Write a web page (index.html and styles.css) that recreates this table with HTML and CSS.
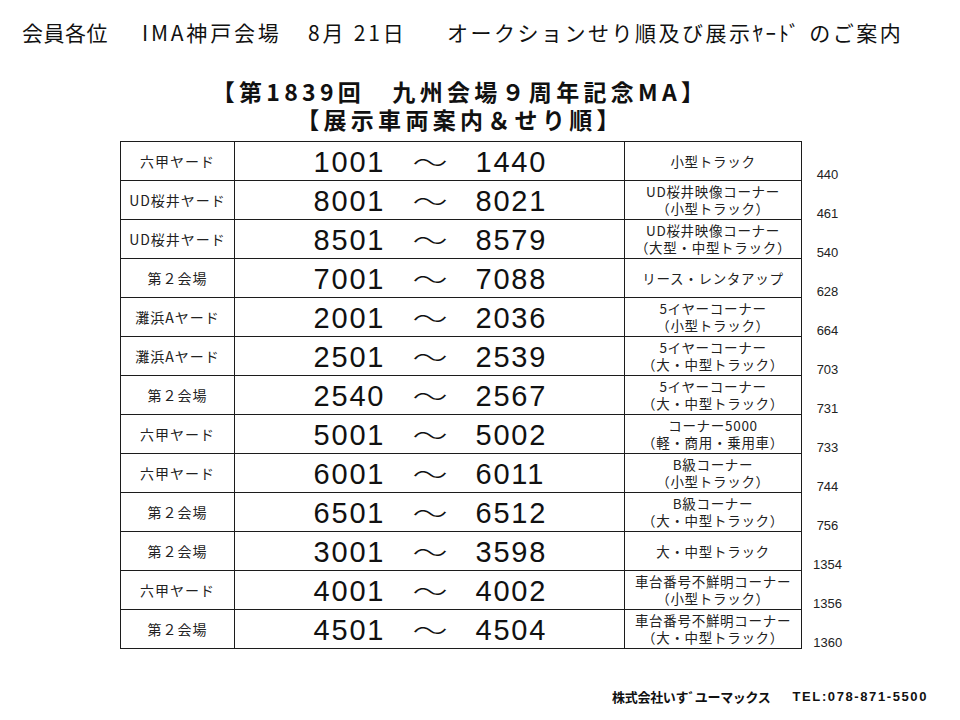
FILE: index.html
```html
<!DOCTYPE html>
<html lang="ja">
<head>
<meta charset="utf-8">
<title>IMA神戸会場 オークションせり順</title>
<link rel="stylesheet" href="styles.css">
</head>
<body>
<header class="head">
  <span class="h-who">会員各位</span>
  <span class="h-item">IMA神戸会場</span>
  <span class="h-item">8月 21日</span>
  <span class="h-item h-last">オークションせり順及び展示ﾔｰﾄﾞ のご案内</span>
</header>

<div class="title">
  <div>【第1839回　九州会場９周年記念MA】</div>
  <div>【展示車両案内＆せり順】</div>
</div>

<table class="grid">
  <colgroup>
    <col class="c-yard"><col class="c-range"><col class="c-corner"><col class="c-count">
  </colgroup>
  <tbody>
    <tr><td class="yard">六甲ヤード</td><td class="range"><div class="rg"><span class="n1">1001</span><span class="til">～</span><span class="n2">1440</span></div></td><td class="corner">小型トラック</td><td class="count">440</td></tr>
    <tr><td class="yard">UD桜井ヤード</td><td class="range"><div class="rg"><span class="n1">8001</span><span class="til">～</span><span class="n2">8021</span></div></td><td class="corner">UD桜井映像コーナー<br>（小型トラック）</td><td class="count">461</td></tr>
    <tr><td class="yard">UD桜井ヤード</td><td class="range"><div class="rg"><span class="n1">8501</span><span class="til">～</span><span class="n2">8579</span></div></td><td class="corner">UD桜井映像コーナー<br>（大型・中型トラック）</td><td class="count">540</td></tr>
    <tr><td class="yard">第２会場</td><td class="range"><div class="rg"><span class="n1">7001</span><span class="til">～</span><span class="n2">7088</span></div></td><td class="corner">リース・レンタアップ</td><td class="count">628</td></tr>
    <tr><td class="yard">灘浜Aヤード</td><td class="range"><div class="rg"><span class="n1">2001</span><span class="til">～</span><span class="n2">2036</span></div></td><td class="corner">5イヤーコーナー<br>（小型トラック）</td><td class="count">664</td></tr>
    <tr><td class="yard">灘浜Aヤード</td><td class="range"><div class="rg"><span class="n1">2501</span><span class="til">～</span><span class="n2">2539</span></div></td><td class="corner">5イヤーコーナー<br>（大・中型トラック）</td><td class="count">703</td></tr>
    <tr><td class="yard">第２会場</td><td class="range"><div class="rg"><span class="n1">2540</span><span class="til">～</span><span class="n2">2567</span></div></td><td class="corner">5イヤーコーナー<br>（大・中型トラック）</td><td class="count">731</td></tr>
    <tr><td class="yard">六甲ヤード</td><td class="range"><div class="rg"><span class="n1">5001</span><span class="til">～</span><span class="n2">5002</span></div></td><td class="corner">コーナー5000<br>（軽・商用・乗用車）</td><td class="count">733</td></tr>
    <tr><td class="yard">六甲ヤード</td><td class="range"><div class="rg"><span class="n1">6001</span><span class="til">～</span><span class="n2">6011</span></div></td><td class="corner">B級コーナー<br>（小型トラック）</td><td class="count">744</td></tr>
    <tr><td class="yard">第２会場</td><td class="range"><div class="rg"><span class="n1">6501</span><span class="til">～</span><span class="n2">6512</span></div></td><td class="corner">B級コーナー<br>（大・中型トラック）</td><td class="count">756</td></tr>
    <tr><td class="yard">第２会場</td><td class="range"><div class="rg"><span class="n1">3001</span><span class="til">～</span><span class="n2">3598</span></div></td><td class="corner">大・中型トラック</td><td class="count">1354</td></tr>
    <tr><td class="yard">六甲ヤード</td><td class="range"><div class="rg"><span class="n1">4001</span><span class="til">～</span><span class="n2">4002</span></div></td><td class="corner">車台番号不鮮明コーナー<br>（小型トラック）</td><td class="count">1356</td></tr>
    <tr><td class="yard">第２会場</td><td class="range"><div class="rg"><span class="n1">4501</span><span class="til">～</span><span class="n2">4504</span></div></td><td class="corner">車台番号不鮮明コーナー<br>（大・中型トラック）</td><td class="count">1360</td></tr>
  </tbody>
</table>

<footer class="foot">
  <span class="f-name">株式会社いすﾞユーマックス</span>
  <span class="f-tel">TEL:078-871-5500</span>
</footer>
</body>
</html>
```
FILE: styles.css
```css
* { box-sizing: border-box; }
html, body { background: #fff; }
body {
  margin: 0;
  width: 960px;
  height: 720px;
  overflow: hidden;
  color: #111;
  font-family: "Noto Sans CJK JP", "Noto Sans", sans-serif;
}

.head {
  display: grid;
  grid-template-columns: 120px 166px 139px auto;
  padding: 19px 0 0 22px;
  font-size: 21px;
  line-height: 26px;
  white-space: nowrap;
}
.h-who { letter-spacing: 0.5px; }
.h-item { letter-spacing: 2.8px; }
.h-last { letter-spacing: 2.5px; }

.title {
  margin-top: 32px;
  padding-right: 40px;
  text-align: center;
  font-size: 23px;
  line-height: 28px;
  font-weight: 700;
  letter-spacing: 4.3px;
}

.grid {
  margin: 8px 0 0 120px;
  border-collapse: collapse;
  table-layout: fixed;
  width: 733px;
}
.c-yard { width: 114px; }
.c-range { width: 390px; }
.c-corner { width: 177px; }
.c-count { width: 52px; }

.grid tr { height: 39px; }
.grid td {
  padding: 0;
  text-align: center;
  vertical-align: middle;
}
.yard, .range, .corner { border: 1px solid #1c1c1c; }

.yard {
  font-size: 14px;
  letter-spacing: 1px;
  color: #222;
}
.corner {
  font-size: 13.5px;
  line-height: 17px;
  letter-spacing: 0.7px;
  color: #222;
  white-space: nowrap;
}
.count {
  vertical-align: bottom !important;
  font-family: "Liberation Sans", Arial, sans-serif;
  font-size: 13px;
  line-height: 13px;
  color: #222;
}

.rg {
  display: grid;
  grid-template-columns: 1fr auto 1fr;
  column-gap: 30px;
  align-items: center;
  padding-top: 2px;
  font-family: "Liberation Sans", Arial, sans-serif;
  font-size: 29px;
  line-height: 34px;
  letter-spacing: 1.8px;
  color: #111;
}
.n1 { justify-self: end; margin-right: -1.8px; }
.n2 { justify-self: start; }
.til {
  display: inline-block;
  font-family: "Noto Sans CJK JP", sans-serif;
  font-size: 27px;
  font-weight: 300;
  letter-spacing: 0;
  transform: scale(1.3, 1);
  width: 32px;
  text-align: center;
}

.foot {
  display: flex;
  justify-content: flex-end;
  gap: 22px;
  margin-top: 40px;
  padding-right: 32px;
  font-weight: 700;
  font-size: 13px;
  line-height: 16px;
  white-space: nowrap;
}
.f-name { letter-spacing: -0.3px; }
.f-tel {
  font-family: "Liberation Sans", Arial, sans-serif;
  letter-spacing: 1.6px;
}
```
